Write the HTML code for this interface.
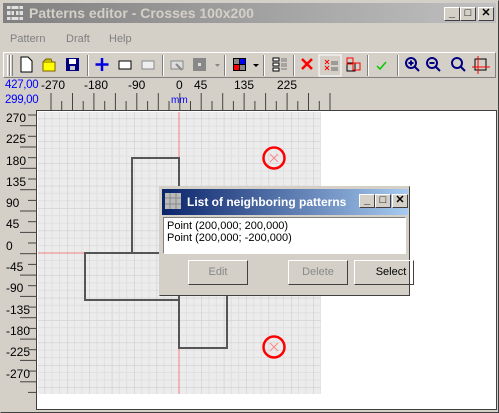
<!DOCTYPE html><html><head><style>
*{margin:0;padding:0;box-sizing:border-box}
body{width:499px;height:413px;background:#d4d0c8;font-family:"Liberation Sans",sans-serif;font-size:11px;position:relative;overflow:hidden}
.a{position:absolute}
.tb{position:absolute;top:0;left:0;width:499px;height:24px;background:linear-gradient(90deg,#808080,#c0c0c0)}
.btn{position:absolute;width:16px;height:14px;background:#d4d0c8;border:1px solid;border-color:#fff #404040 #404040 #fff;font-size:11px;font-weight:bold;text-align:center;line-height:11px}
.sep{position:absolute;top:55px;width:2px;height:21px;border-left:1px solid #808080;border-right:1px solid #fff}
</style></head><body>
<div style="position:absolute;left:0;top:0;width:499px;height:413px;border:1px solid;border-color:#d4d0c8 #404040 #404040 #d4d0c8"></div>
<div class="tb" style="left:3px;top:3px;width:493px;height:20px"></div>
<svg class="a" style="left:7px;top:6px" width="16" height="14"><g fill="#e0e0e0"><rect x="0" y="0" width="16" height="3"/><rect x="0" y="5" width="7" height="4"/><rect x="9" y="5" width="7" height="4"/><rect x="0" y="11" width="16" height="3"/></g><g stroke="#808080"><line x1="4" y1="0" x2="4" y2="14"/><line x1="12" y1="0" x2="12" y2="14"/></g></svg>
<div class="a" style="left:29px;top:5px;color:#d4d0c8;font-weight:bold;font-size:14px">Patterns editor - Crosses 100x200</div>
<div class="btn" style="left:444px;top:7px">_</div><div class="btn" style="left:460px;top:7px">□</div><div class="btn" style="left:478px;top:7px">✕</div>
<div class="a" style="left:10px;top:33px;color:#808080;font-size:11px">Pattern</div>
<div class="a" style="left:66px;top:33px;color:#808080">Draft</div>
<div class="a" style="left:109px;top:33px;color:#808080">Help</div>
<div class="a" style="left:3px;top:52px;width:493px;height:26px;border:1px solid;border-color:#fff #808080 #808080 #fff"></div>
<div class="a" style="left:7px;top:55px;width:3px;height:21px;border-left:1px solid #fff;border-right:1px solid #808080"></div>
<div class="a" style="left:10px;top:55px;width:3px;height:21px;border-left:1px solid #fff;border-right:1px solid #808080"></div>
<svg class="a" style="left:0;top:52px" width="499" height="26">
<path d="M21 5h7l4 4v11h-11z" fill="#fff" stroke="#000"/>
<path d="M43 10h12v9h-12z" fill="#ff0" stroke="#806000"/><path d="M43 10l3-3h5l1 3" fill="#c0c000" stroke="#806000"/>
<rect x="66" y="6" width="13" height="13" fill="#000080"/><rect x="69" y="7" width="7" height="5" fill="#fff"/><rect x="70" y="14" width="5" height="4" fill="#ccc"/>
<path d="M102 6v13M95.5 12.5h13" stroke="#0000e0" stroke-width="2.5"/>
<rect x="119" y="9" width="12" height="8" fill="#fff" stroke="#000"/>
<rect x="142" y="9" width="12" height="8" fill="#eee" stroke="#888"/>
<rect x="171" y="9" width="12" height="8" fill="#ddd" stroke="#888"/><path d="M176 12l6 6" stroke="#888" stroke-width="2"/>
<rect x="193" y="6" width="13" height="13" fill="#888"/><rect x="198" y="11" width="3" height="3" fill="#ddd"/>
<path d="M215 12h5l-2.5 3z" fill="#888"/>
<rect x="233" y="6" width="13" height="13" fill="#000"/><rect x="234" y="7" width="5" height="5" fill="#888"/><rect x="240" y="7" width="5" height="5" fill="#00f"/><rect x="234" y="13" width="5" height="5" fill="#f00"/><rect x="240" y="13" width="5" height="5" fill="#888"/>
<path d="M253 12h6l-3 3z" fill="#000"/>
<g fill="#fff" stroke="#000"><rect x="273" y="6" width="6" height="3"/><rect x="273" y="11" width="6" height="3"/><rect x="273" y="16" width="6" height="3"/></g><path d="M281 7h6M281 9h6M281 12h6M281 14h6M281 17h6" stroke="#777"/>
<path d="M302 7l10 10M312 7l-10 10" stroke="#f00" stroke-width="2.5"/>
<rect x="319" y="3" width="22" height="21" fill="none" stroke="#fff"/><path d="M325 8l4 4M329 8l-4 4M325 14l4 4M329 14l-4 4" stroke="#f00"/><path d="M331 10h7M331 12h7M331 16h7M331 18h7" stroke="#666"/>
<rect x="347" y="11" width="8" height="8" fill="none" stroke="#000"/><rect x="347" y="6" width="6" height="6" fill="none" stroke="#f00"/><rect x="353" y="11" width="7" height="7" fill="none" stroke="#f00"/>
<path d="M377 14l3 3 6-7" stroke="#0c0" stroke-width="1.5" fill="none"/>
<g stroke="#000080" stroke-width="2" fill="none"><circle cx="411" cy="11" r="5"/><path d="M415 15l4 4"/><circle cx="432" cy="11" r="5"/><path d="M436 15l4 4"/><circle cx="457" cy="11" r="5"/><path d="M461 15l4 4"/></g>
<path d="M408.5 11h5M411 8.5v5M429.5 11h5" stroke="#000080" stroke-width="2"/>
<rect x="475" y="7" width="11" height="11" fill="none" stroke="#000"/><path d="M472 15h18M478 4v18" stroke="#f00"/>
</svg>
<div class="sep" style="left:87px"></div><div class="sep" style="left:162px"></div><div class="sep" style="left:224px"></div><div class="sep" style="left:263px"></div><div class="sep" style="left:293px"></div><div class="sep" style="left:367px"></div><div class="sep" style="left:397px"></div>
<div class="a" style="left:5px;top:79px;color:#00f;font-size:11.5px;letter-spacing:-0.3px">427,00</div>
<div class="a" style="left:5px;top:94px;color:#00f;font-size:11.5px;letter-spacing:-0.3px">299,00</div>
<div class="a" style="left:171px;top:95px;color:#00f;font-size:10px">mm</div>
<div class="a" style="font-size:12px;left:41px;top:78px">-270</div><div class="a" style="font-size:12px;left:84px;top:78px">-180</div><div class="a" style="font-size:12px;left:128px;top:78px">-90</div><div class="a" style="font-size:12px;left:176px;top:78px">0</div><div class="a" style="font-size:12px;left:194px;top:78px">45</div><div class="a" style="font-size:12px;left:234px;top:78px">135</div><div class="a" style="font-size:12px;left:277px;top:78px">225</div>
<svg class="a" style="left:0;top:90px" width="499" height="323">
<g stroke="#000" id="tk"></g>
</svg>
<div class="a" style="left:6px;top:108px;line-height:21.3px;font-size:12px;width:30px">270<br>225<br>180<br>135<br>90<br>45<br>0<br>-45<br>-90<br>-135<br>-180<br>-225<br>-270</div>
<svg class="a" style="left:36px;top:110px" width="461" height="300">
<rect x="0" y="0" width="461" height="300" fill="#fff" stroke="#404040" stroke-width="2"/>
<defs><pattern id="g" x="0" y="0" width="22.4" height="22.4" patternUnits="userSpaceOnUse" patternTransform="translate(143 143)">
<rect width="22.4" height="22.4" fill="#ececec"/><path d="M7.47 0v22.4M14.93 0v22.4M0 7.47h22.4M0 14.93h22.4" stroke="#e0e0e0"/><path d="M0 0v22.4M0 0h22.4" stroke="#c8c8c8"/></pattern></defs>
<rect x="2" y="2" width="283" height="282" fill="url(#g)"/>
<path d="M143 2v282M2 143h141" stroke="#f08080"/>
<g fill="none" stroke="#555" stroke-width="2"><path d="M96 143V48h47v95"/><path d="M143 143H49v47h94"/><path d="M143 143h48v95h-48z"/></g>
<g><circle cx="238" cy="48" r="10.5" fill="none" stroke="#f00" stroke-width="2.5"/><path d="M234 44l8 8M242 44l-8 8" stroke="#f88"/>
<circle cx="238" cy="237" r="10.5" fill="none" stroke="#f00" stroke-width="2.5"/><path d="M234 233l8 8M242 233l-8 8" stroke="#f88"/></g>
</svg>
<div class="a" style="left:159px;top:186px;width:251px;height:110px;border:1px solid;border-color:#d4d0c8 #404040 #404040 #d4d0c8;background:#d4d0c8">
<div class="a" style="left:2px;top:2px;width:246px;height:26px;background:linear-gradient(90deg,#0a246a,#a6caf0)"></div>
<svg class="a" style="left:5px;top:6px" width="16" height="16"><rect width="16" height="16" fill="#bbb"/><path d="M0 5h16M0 11h16M5 0v16M11 0v16" stroke="#888"/></svg>
<div class="a" style="left:27px;top:8px;color:#fff;font-weight:bold;font-size:12px">List of neighboring patterns</div>
<div class="btn" style="left:199px;top:7px">_</div><div class="btn" style="left:215px;top:7px">□</div><div class="btn" style="left:232px;top:7px">✕</div>
<div class="a" style="left:3px;top:30px;width:243px;height:37px;background:#fff;border:1px solid;border-color:#808080 #fff #fff #808080;padding:2px 3px;line-height:12px;font-size:11px">Point (200,000; 200,000)<br>Point (200,000; -200,000)</div>
<div class="a" style="left:28px;top:73px;width:60px;height:25px;border:1px solid;border-color:#fff #404040 #404040 #fff;color:#888;text-align:center;line-height:23px">Edit</div>
<div class="a" style="left:128px;top:73px;width:60px;height:25px;border:1px solid;border-color:#fff #404040 #404040 #fff;color:#888;text-align:center;line-height:23px">Delete</div>
<div class="a" style="left:194px;top:73px;width:60px;height:25px;border:1px solid;border-color:#fff #404040 #404040 #fff;text-align:center;line-height:23px;padding-left:14px">Select</div>
</div>
<script>
var t=document.getElementById('tk'),h='';
for(var i=0;i<27;i++){var x=51+i*10.73;var L=i%2==0;h+='<line x1="'+x.toFixed(1)+'" y1="'+(L?3:11)+'" x2="'+x.toFixed(1)+'" y2="20" stroke="#444"/>';}
for(var j=0;j<27;j++){var y=25+j*10.67;var L=j%2==0;h+='<line x1="'+(L?28:20)+'" y1="'+y.toFixed(1)+'" x2="36" y2="'+y.toFixed(1)+'" stroke="#444"/>';}
t.innerHTML=h;
</script>
</body></html>
